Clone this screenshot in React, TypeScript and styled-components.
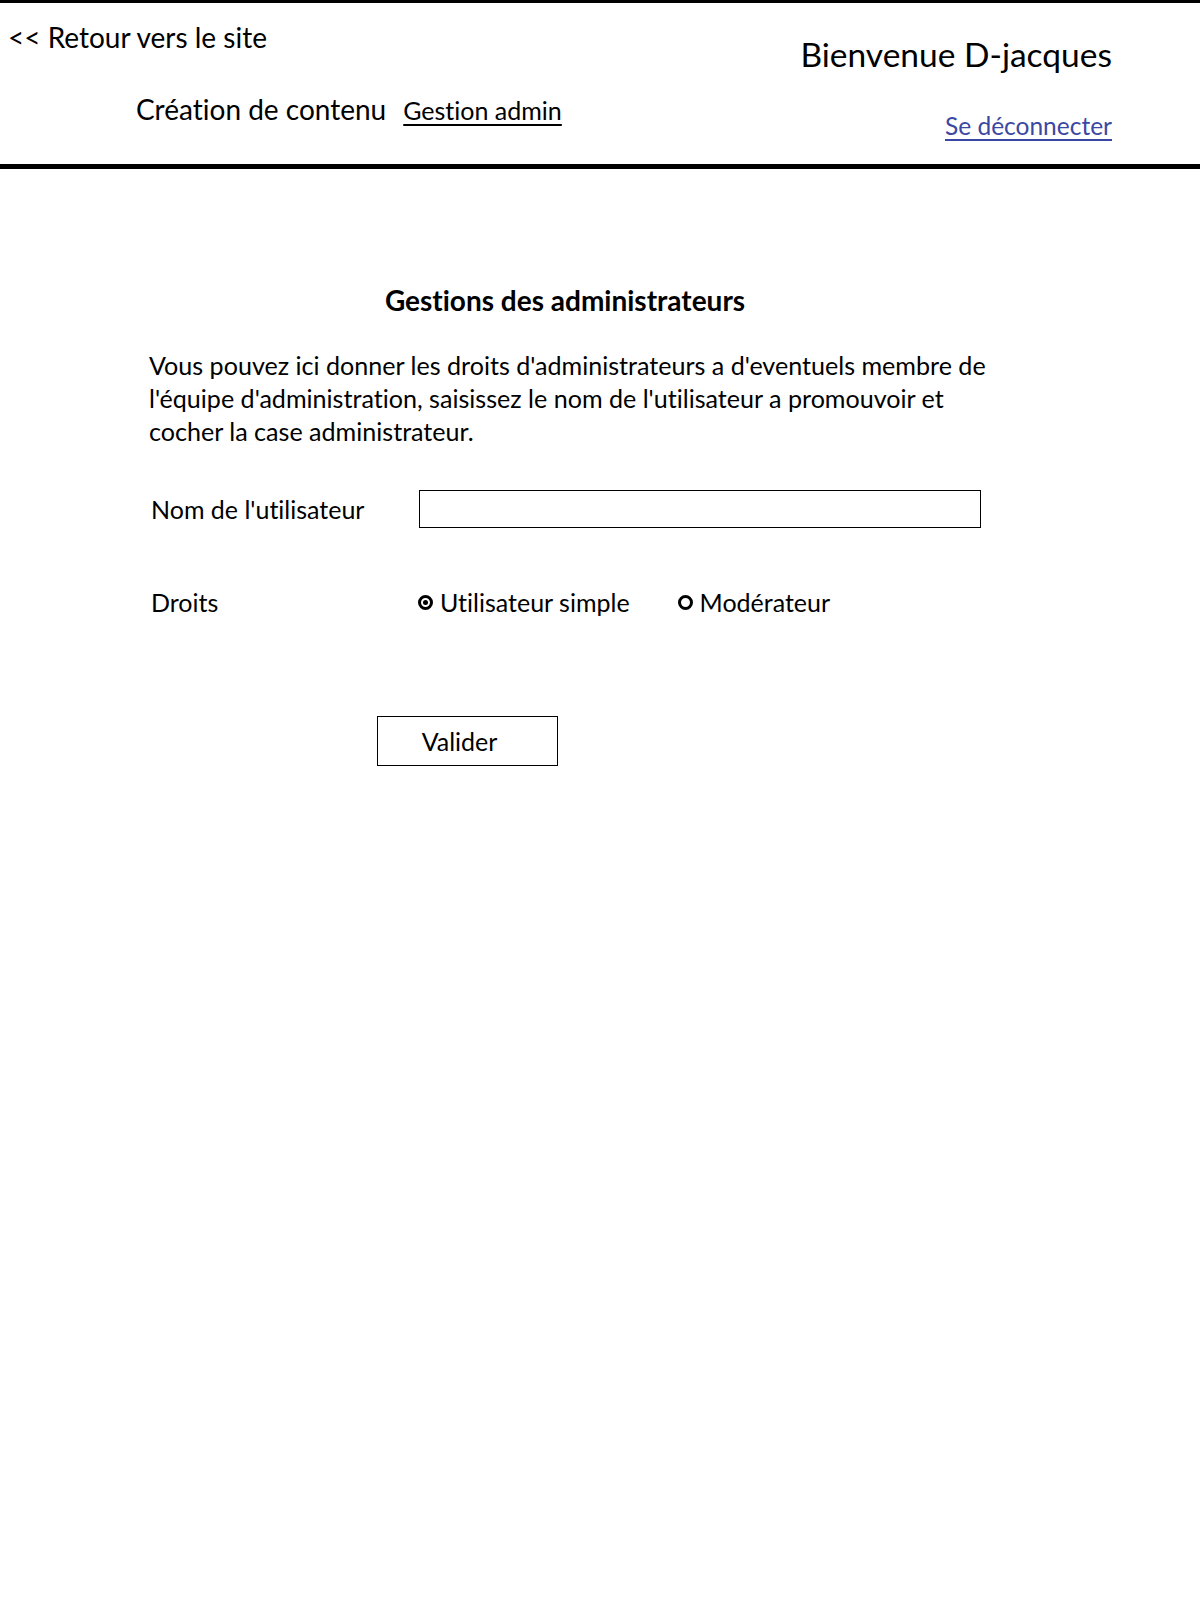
import React from "react";
import styled, { createGlobalStyle } from "styled-components";

const GlobalStyle = createGlobalStyle`
  html, body { margin: 0; padding: 0; background: #ffffff; }
  body {
    font-family: Lato, "Open Sans", sans-serif;
    color: #000;
    font-variant-ligatures: none;
    font-feature-settings: "liga" 0, "clig" 0;
  }
  input, button { font-variant-ligatures: none; font-feature-settings: "liga" 0, "clig" 0; }
`;

const Header = styled.header`
  border-top: 3px solid #000;
  border-bottom: 5px solid #000;
  height: 161px;
  display: flex;
  justify-content: space-between;
`;

const LeftCol = styled.div`
  display: flex;
  flex-direction: column;
  padding-left: 8px;
  padding-top: 19px;
`;

const BackLink = styled.a`
  font-size: 28px;
  line-height: 30px;
  color: #000;
  text-decoration: none;
`;

const Nav = styled.nav`
  display: flex;
  align-items: baseline;
  gap: 17px;
  margin-top: 42px;
  padding-left: 128px;
`;

const NavItem = styled.a<{ $active?: boolean }>`
  font-size: ${(p) => (p.$active ? "25px" : "28px")};
  line-height: 30px;
  color: #000;
  text-decoration: ${(p) => (p.$active ? "underline" : "none")};
  text-underline-offset: 4px;
  text-decoration-thickness: 2px;
`;

const RightCol = styled.div`
  display: flex;
  flex-direction: column;
  align-items: flex-end;
  padding-right: 88px;
  padding-top: 33px;
`;

const Welcome = styled.div`
  font-size: 33.5px;
  line-height: 36px;
`;

const Logout = styled.a`
  font-size: 24.5px;
  line-height: 30px;
  margin-top: 39px;
  color: #3b48a3;
  text-decoration: underline;
  text-underline-offset: 4px;
  text-decoration-thickness: 2px;
`;

const Main = styled.main`
  width: 860px;
  margin-left: 149px;
  padding-top: 113px;
`;

const Title = styled.h1`
  margin: 0;
  width: 832px;
  text-align: center;
  font-size: 28px;
  line-height: 36px;
  font-weight: 700;
`;

const Intro = styled.p`
  margin: 31px 0 0 0;
  font-size: 25.1px;
  line-height: 33px;
  white-space: nowrap;
`;

const Row = styled.div<{ $gapTop: number }>`
  display: grid;
  grid-template-columns: 268px 1fr;
  align-items: center;
  margin-top: ${(p) => p.$gapTop}px;
  padding-left: 2px;
`;

const Label = styled.label`
  font-size: 25px;
  line-height: 30px;
`;

const TextInput = styled.input`
  box-sizing: border-box;
  width: 562px;
  height: 38px;
  border: 1.5px solid #000;
  border-radius: 0;
  outline: none;
  font-family: inherit;
  font-size: 22px;
  padding: 0 8px;
`;

const Radios = styled.div`
  display: flex;
  align-items: center;
  gap: 48px;
  margin-left: -1px;
`;

const RadioOption = styled.label`
  display: flex;
  align-items: center;
  gap: 7px;
  font-size: 25px;
  line-height: 30px;
`;

const RadioDot = styled.span<{ $checked?: boolean }>`
  box-sizing: border-box;
  width: 15px;
  height: 15px;
  border-radius: 50%;
  border: 3px solid #000;
  display: inline-flex;
  align-items: center;
  justify-content: center;
  &::after {
    content: "";
    width: 5px;
    height: 5px;
    border-radius: 50%;
    background: ${(p) => (p.$checked ? "#000" : "transparent")};
  }
`;

const SubmitButton = styled.button`
  box-sizing: border-box;
  display: block;
  margin-top: 99px;
  margin-left: 228px;
  width: 181px;
  height: 50px;
  background: #fff;
  border: 1.5px solid #000;
  border-radius: 0;
  font-family: inherit;
  font-size: 25px;
  color: #000;
  padding: 0 16px 0 0;
  text-align: center;
`;

export default function App() {
  return (
    <>
      <GlobalStyle />
      <Header>
        <LeftCol>
          <BackLink href="#">&lt;&lt; Retour vers le site</BackLink>
          <Nav>
            <NavItem href="#">Création de contenu</NavItem>
            <NavItem href="#" $active>
              Gestion admin
            </NavItem>
          </Nav>
        </LeftCol>
        <RightCol>
          <Welcome>Bienvenue D-jacques</Welcome>
          <Logout href="#">Se déconnecter</Logout>
        </RightCol>
      </Header>
      <Main>
        <Title>Gestions des administrateurs</Title>
        <Intro>
          Vous pouvez ici donner les droits d'administrateurs a d'eventuels membre de
          <br />
          l'équipe d'administration, saisissez le nom de l'utilisateur a promouvoir et
          <br />
          cocher la case administrateur.
        </Intro>
        <Row $gapTop={42}>
          <Label>Nom de l'utilisateur</Label>
          <TextInput type="text" />
        </Row>
        <Row $gapTop={59}>
          <Label>Droits</Label>
          <Radios>
            <RadioOption>
              <RadioDot $checked />
              Utilisateur simple
            </RadioOption>
            <RadioOption>
              <RadioDot />
              Modérateur
            </RadioOption>
          </Radios>
        </Row>
        <SubmitButton type="button">Valider</SubmitButton>
      </Main>
    </>
  );
}
